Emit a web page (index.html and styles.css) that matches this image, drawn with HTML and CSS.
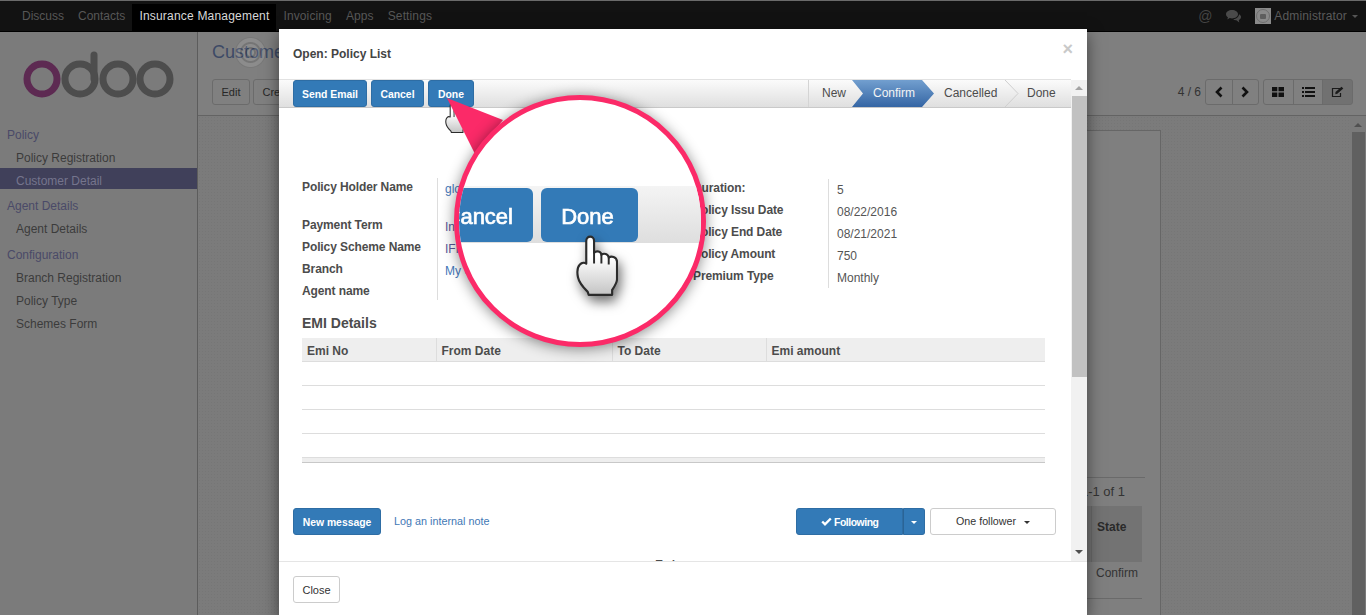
FILE: index.html
```html
<!DOCTYPE html>
<html lang="en">
<head>
<meta charset="utf-8">
<title>Policy List</title>
<link rel="stylesheet" href="styles.css">
</head>
<body>
<svg class="defs" width="0" height="0" aria-hidden="true">
  <defs>
    <linearGradient id="handfill" x1="0" y1="0" x2="0" y2="1">
      <stop offset="0.35" stop-color="#ffffff"/>
      <stop offset="1" stop-color="#c4c4c4"/>
    </linearGradient>
    <symbol id="hand" viewBox="-1 -1 43 62">
      <path d="M9.5 24V5C9.5-1 17.5-1 17.5 5V17C20 14.5 24.5 15.5 25 19C27.5 17 32 18 32.5 22C35 20 40.5 21 41 26V44C41 48 38 52 36 55V60H12L11 57C7 53 2 47 1 42C0 37 0 32 3 29C5 27 8 27 9.5 28Z" fill="url(#handfill)" stroke="#2b2b2b" stroke-width="2.2" stroke-linejoin="round"/>
      <path d="M17.5 17V28M25 19V28M32.5 22V29" fill="none" stroke="#2b2b2b" stroke-width="2"/>
    </symbol>
  </defs>
</svg>

<header class="navbar">
  <nav class="nav-left">
    <a class="nav-link">Discuss</a>
    <a class="nav-link">Contacts</a>
    <a class="nav-link nav-active">Insurance Management</a>
    <a class="nav-link nav-link-wide">Invoicing</a>
    <a class="nav-link nav-link-wide">Apps</a>
    <a class="nav-link nav-link-wide">Settings</a>
  </nav>
  <div class="nav-right">
    <span class="nav-at">@</span>
    <svg class="nav-chat" width="15" height="13" viewBox="0 0 15 13"><path d="M6 0C2.7 0 0 1.8 0 4.2C0 5.5.8 6.6 2 7.4L1.2 9.4L3.8 8.1C4.5 8.3 5.2 8.4 6 8.4C9.3 8.4 12 6.5 12 4.2C12 1.8 9.3 0 6 0Z" fill="#4a4a4a"/><path d="M13 4.2C13 6.8 10.5 8.9 7.2 9.3C8 10 9.1 10.4 10.4 10.3L13.3 12.5L12.8 9.9C14.1 9.2 15 8.1 15 6.9C15 5.7 14.2 4.9 13 4.2Z" fill="#4a4a4a"/></svg>
    <span class="avatar"><svg width="16" height="16" viewBox="0 0 16 16"><circle cx="8" cy="8" r="6.500" fill="none" stroke="#6e6e6e" stroke-width="1"/><rect x="5" y="6" width="6" height="5" rx="1" fill="#5e5e5e"/></svg></span>
    <span class="nav-user">Administrator</span>
    <span class="caret caret-dim"></span>
  </div>
</header>

<div class="app">
  <aside class="sidebar">
    <div class="logo">
      <svg width="154" height="58" viewBox="0 0 154 58">
        <circle cx="22" cy="30" r="15" fill="none" stroke="#5d2a52" stroke-width="7"/>
        <circle cx="60" cy="30" r="15" fill="none" stroke="#4d4d4d" stroke-width="7"/>
        <path d="M74 30V6" fill="none" stroke="#4d4d4d" stroke-width="7" stroke-linecap="round"/>
        <circle cx="98" cy="30" r="15" fill="none" stroke="#4d4d4d" stroke-width="7"/>
        <circle cx="135" cy="30" r="15" fill="none" stroke="#4d4d4d" stroke-width="7"/>
      </svg>
    </div>
    <section class="nav-section">
      <div class="nav-title">Policy</div>
      <a class="nav-item">Policy Registration</a>
      <a class="nav-item nav-item-active">Customer Detail</a>
    </section>
    <section class="nav-section">
      <div class="nav-title">Agent Details</div>
      <a class="nav-item">Agent Details</a>
    </section>
    <section class="nav-section nav-section-last">
      <div class="nav-title">Configuration</div>
      <a class="nav-item">Branch Registration</a>
      <a class="nav-item">Policy Type</a>
      <a class="nav-item">Schemes Form</a>
    </section>
  </aside>

  <main class="content">
    <div class="panel">
      <h1 class="crumb">Customer Detail</h1>
      <div class="panel-row">
        <div class="panel-actions">
          <button class="bg-btn">Edit</button>
          <button class="bg-btn">Create</button>
        </div>
        <div class="panel-right">
          <span class="pager-text">4 / 6</span>
          <div class="btn-group">
            <button class="bg-btn icon-btn pager-btn"><svg width="10" height="12" viewBox="0 0 10 12"><path d="M7.5 1.500L3 6L7.5 10.500" fill="none" stroke="#111" stroke-width="2.600"/></svg></button>
            <button class="bg-btn icon-btn pager-btn"><svg width="10" height="12" viewBox="0 0 10 12"><path d="M2.500 1.500L7 6L2.500 10.500" fill="none" stroke="#111" stroke-width="2.600"/></svg></button>
          </div>
          <div class="btn-group">
            <button class="bg-btn icon-btn view-btn"><svg width="12" height="10" viewBox="0 0 12 10"><path d="M0 0H5.300V4.300H0ZM6.500 0H12V4.300H6.500ZM0 5.500H5.300V10H0ZM6.500 5.500H12V10H6.500Z" fill="#111"/></svg></button>
            <button class="bg-btn icon-btn view-btn"><svg width="13" height="10" viewBox="0 0 13 10"><path d="M0 0H2V2H0ZM3 0H13V2H3ZM0 4H2V6H0ZM3 4H13V6H3ZM0 8H2V10H0ZM3 8H13V10H3Z" fill="#111"/></svg></button>
            <button class="bg-btn icon-btn view-btn view-active"><svg width="13" height="12" viewBox="0 0 13 12"><path d="M9 2.500H1.500V10.500H9.500V7" fill="none" stroke="#1a1a1a" stroke-width="1.200"/><path d="M4.500 6L10.500.8L12.300 2.400L6.300 7.800L4.300 8.200Z" fill="#1a1a1a"/></svg></button>
          </div>
        </div>
      </div>
    </div>
    <div class="workspace">
      <div class="sheet-area">
        <div class="sheet">
          <div class="sheet-rule"></div>
          <div class="sheet-pager">1-1 of 1</div>
          <div class="sheet-head"><span class="sheet-state">State</span></div>
          <div class="sheet-cell">Confirm</div>
        </div>
      </div>
      <div class="bg-scroll">
        <span class="arrow-up arrow-up-dim"></span>
        <div class="bg-thumb"></div>
      </div>
    </div>
  </main>
</div>

<div class="ripple"></div>

<div class="modal">
  <div class="modal-head">
    <h2 class="modal-title">Open: Policy List</h2>
    <span class="modal-x">×</span>
  </div>
  <div class="modal-body">
    <div class="modal-main">
      <div class="statusbar">
        <div class="status-actions">
          <button class="btn-blue btn-send">Send Email</button>
          <button class="btn-blue btn-cancel">Cancel</button>
          <button class="btn-blue btn-done">Done</button>
        </div>
        <div class="steps">
          <span class="step step-new">New</span>
          <span class="step step-active">Confirm</span>
          <span class="step step-cancelled">Cancelled
            <svg class="chev" width="14" height="27" viewBox="0 0 14 27"><path d="M0 0L13 13.500L0 27" fill="none" stroke="#cfcfcf"/></svg>
          </span>
          <span class="step step-done">Done</span>
        </div>
      </div>

      <div class="form">
        <div class="fields">
          <div class="group">
            <div class="labels">
              <div class="row row-tall lbl">Policy Holder Name</div>
              <div class="row lbl">Payment Term</div>
              <div class="row lbl">Policy Scheme Name</div>
              <div class="row lbl">Branch</div>
              <div class="row lbl">Agent name</div>
            </div>
            <div class="vals">
              <div class="row row-tall val link-a">global</div>
              <div class="row val link-b">Installment</div>
              <div class="row val link-b">IFFCO</div>
              <div class="row val link-a">My Company</div>
            </div>
          </div>
          <div class="group group-right">
            <div class="labels">
              <div class="row lbl">Duration:</div>
              <div class="row lbl">Policy Issu Date</div>
              <div class="row lbl">Policy End Date</div>
              <div class="row lbl">Policy Amount</div>
              <div class="row lbl">Premium Type</div>
            </div>
            <div class="vals">
              <div class="row val">5</div>
              <div class="row val">08/22/2016</div>
              <div class="row val">08/21/2021</div>
              <div class="row val">750</div>
              <div class="row val">Monthly</div>
            </div>
          </div>
        </div>

        <h3 class="emi-title">EMI Details</h3>
        <table class="emi">
          <colgroup><col class="c1"><col class="c2"><col class="c3"><col class="c4"></colgroup>
          <thead>
            <tr><th>Emi No</th><th>From Date</th><th>To Date</th><th>Emi amount</th></tr>
          </thead>
          <tbody>
            <tr><td></td><td></td><td></td><td></td></tr>
            <tr><td></td><td></td><td></td><td></td></tr>
            <tr><td></td><td></td><td></td><td></td></tr>
            <tr><td></td><td></td><td></td><td></td></tr>
          </tbody>
          <tfoot>
            <tr><td colspan="4"></td></tr>
          </tfoot>
        </table>
      </div>

      <div class="chatter">
        <div class="chatter-left">
          <button class="btn-blue btn-msg">New message</button>
          <a class="note-link">Log an internal note</a>
        </div>
        <div class="chatter-right">
          <div class="split">
            <button class="btn-blue btn-follow"><svg width="11" height="9" viewBox="0 0 11 9"><path d="M1.200 4.500L4 7.300L9.800 1.500" fill="none" stroke="#fff" stroke-width="2.400"/></svg> Following</button>
            <button class="btn-blue btn-caret"><span class="caret"></span></button>
          </div>
          <button class="btn-white">One follower <span class="caret caret-dark"></span></button>
        </div>
      </div>
      <div class="today">Today</div>
    </div>
    <div class="modal-scroll">
      <span class="arrow-up"></span>
      <div class="modal-thumb"></div>
      <span class="arrow-down"></span>
    </div>
  </div>
  <div class="modal-foot">
    <button class="btn-close">Close</button>
  </div>
</div>

<svg class="cursor-small" width="21" height="30"><use href="#hand"/></svg>
<svg class="pointer" width="60" height="60" viewBox="0 0 60 60"><path d="M0 0L56 22L28 56Z" fill="#fb2a68"/></svg>

<div class="lens">
  <div class="lens-band">
    <span class="lens-btn lens-cancel">Cancel</span>
    <span class="lens-btn lens-done">Done</span>
  </div>
  <svg class="lens-hand" width="42" height="61"><use href="#hand"/></svg>
</div>
</body>
</html>
```
FILE: styles.css
```css
* { box-sizing: border-box; }
html, body { margin: 0; height: 615px; overflow: hidden; }
body {
  position: relative;
  font-family: "Liberation Sans", Arial, sans-serif;
  font-size: 12px;
  color: #333;
  background: #7d7d7d;
}
button { font-family: inherit; cursor: pointer; }
.defs { position: absolute; }

/* top bar */
.navbar {
  height: 32px;
  background: #121212;
  border-top: 1px solid #6a6a6a;
  border-bottom: 1px solid #000;
  display: flex;
  justify-content: space-between;
  align-items: stretch;
}
.nav-left { display: flex; padding-left: 15px; padding-top: 3px; }
.nav-link { padding: 0 7px; line-height: 25px; color: #575757; }
.nav-link-wide { letter-spacing: .12px; }
.nav-active { background: #000; color: #d8d8d8; letter-spacing: .2px; }
.nav-right { display: flex; align-items: center; padding-right: 8px; color: #4f4f4f; }
.nav-at { font-size: 14px; margin-right: 14px; color: #454545; }
.nav-chat { margin-right: 14px; }
.avatar { width: 16px; height: 16px; background: #8a8a8a; margin-right: 3px; display: flex; }
.nav-user { margin-right: 5px; color: #5a5a5a; letter-spacing: .15px; }
.caret { display: inline-block; width: 0; height: 0; border-top: 4px solid #fff; border-left: 4px solid transparent; border-right: 4px solid transparent; vertical-align: middle; }
.caret-dim { border-top-color: #555; border-left-width: 3px; border-right-width: 3px; border-top-width: 3px; }
.caret-dark { border-top-color: #333; margin-left: 5px; border-left-width: 3px; border-right-width: 3px; border-top-width: 3px; }

/* sidebar */
.app { display: flex; height: 583px; }
.sidebar { width: 198px; flex: none; background: #7b7b7b; border-right: 1px solid #5c5c5c; }
.logo { height: 92px; padding: 17px 0 0 20px; }
.logo svg { display: block; }
.nav-section + .nav-section { margin-top: 6px; }
.nav-section-last.nav-section-last { margin-top: 7px; }
.nav-title { height: 20px; line-height: 22px; margin-bottom: 1px; padding-left: 7px; color: #4a4a68; }
.nav-item { display: block; height: 21px; margin-bottom: 2px; padding: 4px 0 0 16px; line-height: 18px; color: #3b3b3b; }
.nav-item-active { background: #40405a; color: #75758d; }

/* content behind the dialog */
.content { flex: 1; display: flex; flex-direction: column; min-width: 0; }
.panel { height: 84px; background: #7f7f7f; border-bottom: 1px solid #636363; padding: 8px 13px 0 14px; flex: none; }
.crumb { margin: 0; height: 39px; font-size: 18px; font-weight: 400; line-height: 24px; color: #3d4a66; }
.panel-row { display: flex; justify-content: space-between; }
.panel-actions { display: flex; gap: 3px; }
.panel-right { display: flex; align-items: center; gap: 4px; }
.pager-text { font-size: 12px; color: #333; margin-right: 0; }
.btn-group { display: flex; }
.bg-btn { height: 26px; padding: 0 8.5px; background: #808080; border: 1px solid #6b6b6b; border-radius: 3px; font-size: 11px; color: #272727; }
.icon-btn { padding: 0; display: flex; align-items: center; justify-content: center; border-radius: 0; margin-left: -1px; }
.btn-group .icon-btn:first-child { border-radius: 3px 0 0 3px; margin-left: 0; }
.btn-group .icon-btn:last-child { border-radius: 0 3px 3px 0; }
.pager-btn { width: 27.5px; }
.view-btn { width: 30.67px; }
.view-active { background: #717171; }
.workspace {
  flex: 1;
  display: flex;
  background-color: #7b7b7b;
  background-image: radial-gradient(#767676 0.6px, transparent 0.8px);
  background-size: 3px 3px;
  min-height: 0;
}
.sheet-area { flex: 1; display: flex; justify-content: flex-end; padding: 14px 189px 0 0; overflow: hidden; }
.sheet { width: 800px; flex: none; background: #7f7f7f; border: 1px solid #666; border-bottom: 0; padding-top: 346px; }
.sheet-rule { border-top: 1px solid #6a6a6a; margin-left: 700px; margin-right: 15px; }
.sheet-pager { margin-right: 35px; height: 28px; font-size: 13px; line-height: 28px; color: #333; text-align: right; white-space: nowrap; }
.sheet-head { height: 56px; background: #737373; margin-right: 18px; display: flex; justify-content: flex-end; font-weight: 700; color: #2a2a2a; }
.sheet-state { width: 51px; border-left: 1px solid #6a6a6a; padding: 14px 0 0 5px; }
.sheet-cell { height: 37px; border-bottom: 1px solid #6a6a6a; margin-right: 18px; text-align: right; padding: 3px 4px 0 0; line-height: 16px; }
.bg-scroll { width: 16px; flex: none; display: flex; flex-direction: column; align-items: center; background: #7a7a7a; }
.bg-thumb { width: 13px; flex: 1; background: #606060; margin-top: 5px; }
.arrow-up { width: 0; height: 0; border-left: 4px solid transparent; border-right: 4px solid transparent; border-bottom: 4px solid #a3a3a3; margin-top: 6px; }
.arrow-up-dim { border-bottom-color: #505050; margin-top: 7px; }
.arrow-down { width: 0; height: 0; border-left: 4px solid transparent; border-right: 4px solid transparent; border-top: 4px solid #505050; margin-bottom: 7px; }

.ripple {
  position: absolute;
  left: 235px;
  top: 37px;
  width: 31px;
  height: 31px;
  border-radius: 50%;
  background: radial-gradient(circle, rgba(255,255,255,.12) 0 3px, rgba(0,0,0,.1) 4px 5px, rgba(255,255,255,.1) 6px 8px, rgba(0,0,0,.08) 9px 10px, rgba(255,255,255,.1) 11px 14px, rgba(0,0,0,.06) 15px);
}

/* dialog */
.modal {
  position: absolute;
  left: 279px;
  top: 29px;
  width: 808px;
  height: 586px;
  background: #fff;
  display: flex;
  flex-direction: column;
  box-shadow: 0 5px 15px rgba(0, 0, 0, .5);
}
.modal-head { height: 50px; flex: none; padding-left: 14px; display: flex; justify-content: space-between; }
.modal-title { margin: 0; font-size: 12px; font-weight: 700; line-height: 50px; color: #444; }
.modal-x { font-size: 18px; font-weight: 700; line-height: 40px; color: #c9c9c9; margin-right: 14px; }
.modal-body { height: 482px; flex: none; display: flex; }
.modal-main { width: 792px; flex: none; overflow: hidden; }
.modal-scroll { width: 16px; flex: none; background: #f1f1f1; display: flex; flex-direction: column; align-items: center; margin-top: 1px; }
.modal-thumb { width: 15px; height: 281px; background: #c1c1c1; margin-top: 6px; margin-bottom: auto; }
.modal-foot { flex: 1; border-top: 1px solid #e5e5e5; padding: 14px; }

.statusbar {
  height: 29px;
  display: flex;
  justify-content: space-between;
  padding-left: 14px;
  background: linear-gradient(#fbfbfb, #dfdfdf);
  border-top: 1px solid #e2e2e2;
  border-bottom: 1px solid #c9c9c9;
}
.status-actions { display: flex; gap: 4px; }
.btn-blue {
  height: 27px;
  padding: 1px 0 0;
  background: #337ab7;
  border: 1px solid #2e6da4;
  border-radius: 3px;
  color: #fff;
  font-size: 10.4px;
  font-weight: 700;
  line-height: 25px;
}
.btn-send { width: 74px; }
.btn-cancel { width: 53px; }
.btn-done { width: 46px; }
.steps { display: flex; height: 27px; font-size: 12px; }
.step { position: relative; display: flex; align-items: center; line-height: 24px; padding-bottom: 2px; color: #4c4c4c; }
.step-new { width: 44px; padding-left: 13px; border-left: 1px solid #d4d4d4; }
.step-active {
  width: 82px;
  padding-left: 21px;
  color: #f4f4f4;
  font-weight: 400;
  background: linear-gradient(#729fcf, #3465a4);
  clip-path: polygon(0 0, 70px 0, 100% 50%, 70px 100%, 0 100%, 11px 50%);
}
.step-cancelled { width: 84px; padding-left: 10px; }
.chev { position: absolute; left: 71px; top: 0; }
.step-done { width: 53px; padding-left: 9px; }

.form { padding-left: 23px; }
.fields { display: flex; padding-top: 70px; }
.group { display: flex; width: 391px; flex: none; align-items: flex-start; }
.group-right { margin-top: 1px; }
.labels { width: 135px; flex: none; }
.vals { flex: 1; border-left: 1px solid #ddd; padding-left: 7px; align-self: stretch; }
.group-right .vals { padding-left: 8px; align-self: flex-start; padding-bottom: 3px; }
.row { height: 18px; line-height: 18px; margin-bottom: 4px; white-space: nowrap; }
.row:last-child { margin-bottom: 0; }
.row-tall { height: 34px; }
.lbl { font-weight: 700; color: #4c4c4c; letter-spacing: -.1px; }
.val { padding-top: 2px; color: #555; }
.link-a { color: #4577b8; }
.link-b { color: #5a5a98; }
.emi-title { margin: 14px 0 6px; font-size: 14px; line-height: 18px; font-weight: 700; color: #4c4c4c; }
.emi { width: 743px; border-collapse: collapse; table-layout: fixed; color: #4c4c4c; }
.c1 { width: 134px; }
.c2 { width: 176px; }
.c3 { width: 154px; }
.emi th { height: 23px; background: #eee; padding: 3px 0 0 5px; font-weight: 700; text-align: left; border-left: 1px solid #ddd; border-bottom: 1px solid #ddd; }
.emi th:first-child { border-left: 0; }
.emi tbody td { height: 24px; padding: 0; border-bottom: 1px solid #ddd; }
.emi tfoot td { height: 5px; padding: 0; background: #eee; border-top: 1px solid #c8c8c8; border-bottom: 1px solid #c8c8c8; }

.chatter { display: flex; justify-content: space-between; align-items: center; margin-top: 45px; padding: 0 15px 0 14px; }
.chatter-left { display: flex; align-items: center; gap: 13px; }
.btn-msg { width: 88px; }
.note-link { font-size: 10.8px; color: #3f78b5; }
.chatter-right { display: flex; gap: 5px; }
.split { display: flex; }
.btn-follow { width: 107px; border-radius: 3px 0 0 3px; letter-spacing: -.45px; }
.btn-caret { width: 22px; border-radius: 0 3px 3px 0; border-left: 1px solid #2a6496; margin: 0; }
.btn-caret .caret { border-top-width: 3px; border-left-width: 3px; border-right-width: 3px; }
.btn-white { width: 126px; height: 27px; background: #fff; border: 1px solid #ccc; border-radius: 3px; font-size: 10.7px; color: #333; padding: 0; }
.today { margin-top: 23px; padding-right: 7px; text-align: center; font-weight: 700; font-size: 11px; color: #4c4c4c; }
.btn-close { width: 47px; height: 27px; background: #fff; border: 1px solid #ccc; border-radius: 3px; font-size: 11px; color: #333; padding: 0; }

/* call-out */
.cursor-small { position: absolute; left: 445px; top: 103px; }
.pointer { position: absolute; left: 447px; top: 98px; }
.lens {
  position: absolute;
  left: 454px;
  top: 95px;
  width: 252px;
  height: 252px;
  border: 5px solid #fb2a68;
  border-radius: 50%;
  background: #fff;
  overflow: hidden;
  box-shadow: 0 2px 14px rgba(0, 0, 0, .45);
  padding-top: 86px;
}
.lens-band {
  height: 57px;
  display: flex;
  gap: 8px;
  padding-top: 2px;
  margin-left: -22px;
  background: linear-gradient(#f4f4f4, #dedede);
  filter: blur(.7px);
}
.lens-btn {
  height: 54px;
  background: #337ab7;
  border-radius: 6px;
  color: #fff;
  font-size: 22px;
  font-weight: 400;
  -webkit-text-stroke: .7px #fff;
  line-height: 58px;
}
.lens-cancel { width: 96px; padding-right: 20px; text-align: right; }
.lens-done { width: 97px; padding-right: 4px; text-align: center; }
.lens-hand { position: absolute; left: 117px; top: 135px; filter: drop-shadow(3px 6px 6px rgba(0, 0, 0, .55)) blur(.6px); }
```
